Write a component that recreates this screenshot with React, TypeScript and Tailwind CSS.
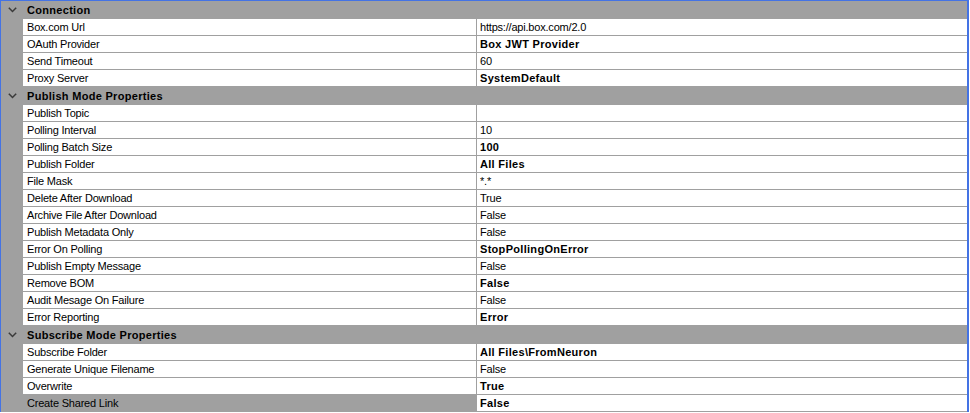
import React from "react";

type Row =
  | { kind: "header"; label: string }
  | { kind: "prop"; name: string; value: string; bold?: boolean; selected?: boolean };

const rows: Row[] = [
  { kind: "header", label: "Connection" },
  { kind: "prop", name: "Box.com Url", value: "https://api.box.com/2.0" },
  { kind: "prop", name: "OAuth Provider", value: "Box JWT Provider", bold: true },
  { kind: "prop", name: "Send Timeout", value: "60" },
  { kind: "prop", name: "Proxy Server", value: "SystemDefault", bold: true },
  { kind: "header", label: "Publish Mode Properties" },
  { kind: "prop", name: "Publish Topic", value: "" },
  { kind: "prop", name: "Polling Interval", value: "10" },
  { kind: "prop", name: "Polling Batch Size", value: "100", bold: true },
  { kind: "prop", name: "Publish Folder", value: "All Files", bold: true },
  { kind: "prop", name: "File Mask", value: "*.*" },
  { kind: "prop", name: "Delete After Download", value: "True" },
  { kind: "prop", name: "Archive File After Download", value: "False" },
  { kind: "prop", name: "Publish Metadata Only", value: "False" },
  { kind: "prop", name: "Error On Polling", value: "StopPollingOnError", bold: true },
  { kind: "prop", name: "Publish Empty Message", value: "False" },
  { kind: "prop", name: "Remove BOM", value: "False", bold: true },
  { kind: "prop", name: "Audit Mesage On Failure", value: "False" },
  { kind: "prop", name: "Error Reporting", value: "Error", bold: true },
  { kind: "header", label: "Subscribe Mode Properties" },
  { kind: "prop", name: "Subscribe Folder", value: "All Files\\FromNeuron", bold: true },
  { kind: "prop", name: "Generate Unique Filename", value: "False" },
  { kind: "prop", name: "Overwrite", value: "True", bold: true },
  { kind: "prop", name: "Create Shared Link", value: "False", bold: true, selected: true },
];

function Chevron() {
  return (
    <svg width="9" height="6" viewBox="0 0 9 6" className="block">
      <path d="M0.8 0.8 L4.5 4.5 L8.2 0.8" fill="none" stroke="#3a3a3a" strokeWidth="1.5" />
    </svg>
  );
}

export default function App() {
  return (
    <div
      className="w-[970px] h-[413px] bg-white text-black text-[11px] leading-none tracking-[-0.2px]"
      style={{ fontFamily: '"Liberation Sans", Arial, sans-serif' }}
    >
      <div className="w-[969px] border-l border-t border-r-2 border-[#4473e4] bg-white flex flex-col">
        {rows.map((r, i) =>
          r.kind === "header" ? (
            <div key={i} className="flex h-[18px] bg-[#a0a0a0]">
              <div className="w-[22px] flex items-center justify-center">
                <Chevron />
              </div>
              <div className="flex items-center pl-[4px] font-bold tracking-[0.3px]">{r.label}</div>
            </div>
          ) : (
            <div key={i} className="flex h-[17px] bg-[#a0a0a0]">
              <div className="w-[22px] shrink-0" />
              <div
                className={
                  "w-[453px] shrink-0 flex items-center pl-[4px] border-b border-[#a0a0a0] " +
                  (r.selected ? "bg-[#a0a0a0]" : "bg-white")
                }
              >
                {r.name}
              </div>
              <div className="w-[1px] shrink-0 bg-[#a0a0a0]" />
              <div
                className={
                  "flex-1 flex items-center pl-[3px] bg-white border-b border-[#a0a0a0] " +
                  (r.bold ? "font-bold tracking-[0.3px]" : "")
                }
              >
                {r.value}
              </div>
            </div>
          )
        )}
      </div>
    </div>
  );
}
